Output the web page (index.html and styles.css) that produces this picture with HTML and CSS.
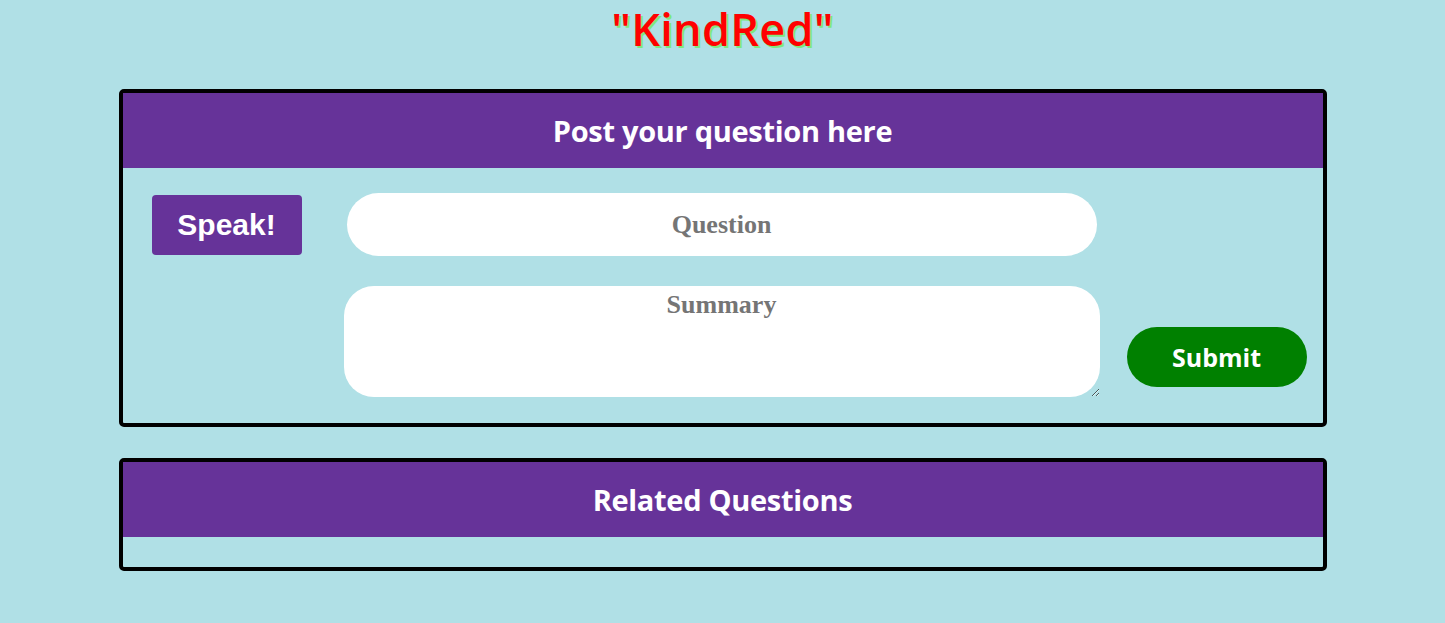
FILE: index.html
```html
<!DOCTYPE html>
<html lang="en">
<head>
<meta charset="utf-8">
<title>KindRed</title>
<link rel="stylesheet" href="styles.css">
</head>
<body>
<h1 class="brand">"KindRed"</h1>
<section class="card">
  <h2 class="card-head">Post your question here</h2>
  <form class="ask">
    <button type="button" class="speak">Speak!</button>
    <input class="question" type="text" placeholder="Question">
    <textarea class="summary" placeholder="Summary"></textarea>
    <button type="button" class="submit">Submit</button>
  </form>
</section>
<section class="card related">
  <h2 class="card-head">Related Questions</h2>
  <div class="related-body"></div>
</section>
</body>
</html>
```
FILE: styles.css
```css
html, body {
  margin: 0;
  padding: 0;
}
body {
  background: #b0e0e6;
  font-family: "Open Sans", "Noto Sans", sans-serif;
}
.brand {
  margin: 0;
  text-align: center;
  color: #ff0000;
  font-family: "Open Sans", sans-serif;
  font-weight: 600;
  font-size: 45px;
  line-height: 58px;
  letter-spacing: 0.3px;
  text-shadow: 2px 2px 0 #7ee87e;
}
.card {
  width: 1200px;
  margin: 31px auto 0;
  border: 4px solid #000;
  border-radius: 5px;
}
.card-head {
  margin: 0;
  height: 75px;
  background: #663399;
  color: #fff;
  font-size: 29px;
  font-weight: 700;
  line-height: 75px;
  text-align: center;
  letter-spacing: -0.3px;
}
.ask {
  display: grid;
  grid-template-columns: 192px 783px 180px;
  padding: 25px 16px 26px 29px;
  row-gap: 30px;
  align-items: start;
}
.speak {
  grid-column: 1;
  grid-row: 1;
  margin-top: 2px;
  width: 150px;
  height: 60px;
  border: none;
  border-radius: 4px;
  background: #663399;
  color: #fff;
  font-family: "Liberation Sans", Arial, sans-serif;
  font-weight: bold;
  font-size: 30px;
  padding: 0;
}
.question {
  grid-column: 2;
  grid-row: 1;
  margin-left: 3px;
  width: 750px;
  height: 63px;
  box-sizing: border-box;
  border: none;
  border-radius: 32px;
  background: #fff;
  text-align: center;
  font-family: "Liberation Serif", "Times New Roman", serif;
  font-weight: bold;
  font-size: 26px;
  outline: none;
}
.summary {
  grid-column: 2;
  grid-row: 2;
  margin: 0;
  width: 756px;
  height: 111px;
  box-sizing: border-box;
  border: none;
  border-radius: 30px;
  background: #fff;
  text-align: center;
  font-family: "Liberation Serif", "Times New Roman", serif;
  font-weight: bold;
  font-size: 26px;
  padding: 4px 10px;
  outline: none;
  display: block;
}
.question::placeholder,
.summary::placeholder {
  color: #757575;
  opacity: 1;
}
.submit {
  grid-column: 3;
  grid-row: 2;
  align-self: end;
  margin: 0 0 10px 0;
  width: 180px;
  height: 60px;
  border: none;
  border-radius: 30px;
  background: #008000;
  color: #fff;
  font-family: "Open Sans", sans-serif;
  font-weight: 700;
  font-size: 25px;
  padding: 0;
}
.related {
  margin-top: 31px;
}
.related-body {
  height: 30px;
}
```
